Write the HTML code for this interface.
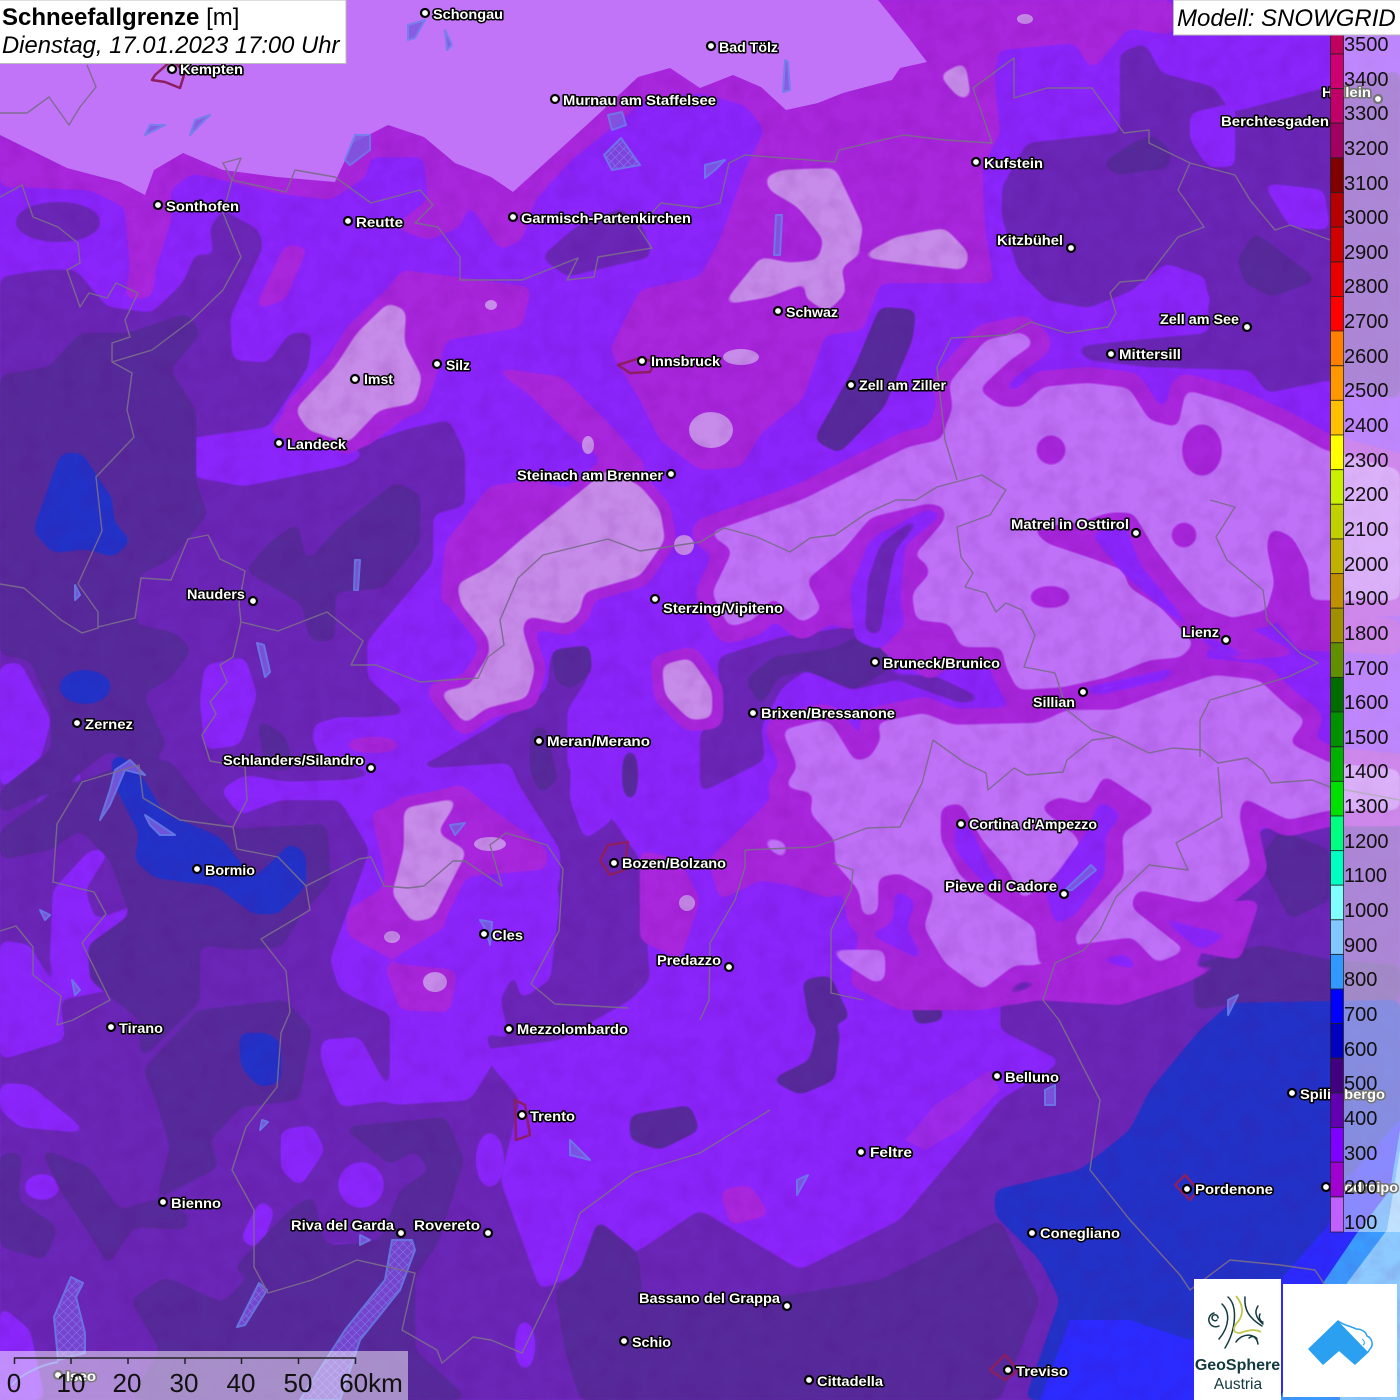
<!DOCTYPE html>
<html><head><meta charset="utf-8"><title>Schneefallgrenze</title>
<style>html,body{margin:0;padding:0;background:#8a25fb}svg{display:block}
.c text{font:bold 13.5px "Liberation Sans",sans-serif;fill:#fff;stroke:#000;stroke-width:3px;paint-order:stroke;stroke-linejoin:round}
.c circle{fill:#fff;stroke:#000;stroke-width:2.2px}
.l text{font:20px "Liberation Sans",sans-serif;fill:#111}
.s text{font:26px "Liberation Sans",sans-serif;fill:#111}
.b{fill:none;stroke:#7a6b8c;stroke-width:1.4;stroke-linejoin:round;opacity:.95}
.lk{fill:#7c5ae0;stroke:#6c80ea;stroke-width:2;stroke-linejoin:round;opacity:.85}
.ct{fill:none;stroke:#8c1f62;stroke-width:2.5;stroke-linejoin:round}
</style></head><body>
<svg width="1400" height="1400" viewBox="0 0 1400 1400" xmlns="http://www.w3.org/2000/svg">
<defs>
<filter id="g" x="0" y="0" width="1400" height="1400" filterUnits="userSpaceOnUse"><feGaussianBlur stdDeviation="5"/><feComponentTransfer><feFuncA type="linear" slope="6" intercept="-2.4"/></feComponentTransfer></filter>
<filter id="t" x="0" y="0" width="1400" height="1400" filterUnits="userSpaceOnUse"><feTurbulence type="fractalNoise" baseFrequency="0.05" numOctaves="3" seed="4"/><feColorMatrix values="0 0 0 0 0.1  0 0 0 0 0  0 0 0 0 0.2  1.6 0 0 0 -0.62"/></filter>
<pattern id="h" width="6" height="6" patternUnits="userSpaceOnUse" patternTransform="rotate(45)"><rect width="6" height="6" fill="#7a4ad8"/><path d="M0 0H6M0 0V6" stroke="#8f8cf0" stroke-width="1"/></pattern>
<path id="LE" d="M802 500L908 447 941 440 953 407 949 383 986 340 1022 332 1035 343 1010 360 978 390 1002 407 1022 407 1043 387 1088 383 1129 388 1149 420 1178 428 1186 390 1231 403 1284 427 1324 450 1400 470 1400 600 1310 600 1308 567 1292 537 1271 528 1267 547 1275 583 1267 610 1231 618 1202 607 1178 580 1153 547 1133 513 1108 513 1080 523 1031 528 1047 543 1092 558 1124 570 1129 587 1161 607 1194 643 1182 657 1149 660 1108 677 1063 687 1018 690 1006 667 1002 647 961 647 949 623 916 620 912 593 931 573 924 560 912 558 945 520 945 507 929 503 871 517 843 550 806 580 822 610 802 623 773 597 753 620 729 627 712 593 733 550 708 533ZM782 730L822 720 831 723 855 762 871 757 882 737 876 723 924 713 953 725 1039 723 1067 710 1116 710 1161 693 1214 675 1259 680 1288 707 1306 720 1288 743 1330 763 1400 770 1400 810 1330 810 1288 820 1243 797 1239 817 1251 867 1210 900 1198 903 1137 890 1131 907 1186 950 1157 963 1133 937 1088 943 1073 945 1039 965 1014 965 982 990 945 963 924 927 935 893 900 873 878 877 878 913 863 917 859 890 835 863 835 840 810 813 814 793 784 787 798 767Z"/>
<path id="LP" d="M457 584L461 604 488 637 490 653 469 686 439 692 465 724 486 708 527 698 535 669 522 629 527 616 567 624 580 612 584 592 640 576 665 540 660 510 640 486 608 469 563 506 522 539 490 567ZM406 310L388 303 357 333 335 367 295 410 308 430 348 443 379 410 415 403 422 377 404 343ZM765 177L782 170 835 168 863 227 857 257 841 267 846 293 827 312 804 297 808 282 769 297 722 305 761 257 790 263 818 260 824 240 798 207 769 190ZM859 257L896 237 945 228 969 253 965 270 904 263ZM939 75L965 62 971 98 959 98ZM404 808L459 798 437 833 467 851 433 918 412 922 392 894 404 849ZM662 665L690 658 712 690 712 718 690 720 665 695Z"/>
</defs>
<rect width="1400" height="1400" fill="#8a25fb"/>

<g fill="#6b27b6" filter="url(#g)">
<polygon points="0,277 45,270 76,270 107,307 152,313 183,283 196,253 214,257 210,227 223,210 259,230 263,247 230,317 232,360 268,363 290,333 312,333 308,367 268,427 174,440 196,478 245,486 327,457 408,429 449,420 465,453 465,506 433,514 433,563 367,641 367,678 408,714 351,718 310,731 318,755 380,767 428,763 490,727 547,690 551,653 588,649 588,678 567,710 567,767 616,824 640,860 650,980 630,1000 560,1040 478,1050 520,1100 500,1180 540,1290 640,1250 700,1210 800,1270 900,1220 960,1150 1000,1100 1050,1070 1100,1030 1182,940 1200,960 1259,830 1330,815 1400,810 1400,1400 0,1400"/>
<polygon points="1002,187 1027,143 1120,133 1120,53 1145,43 1161,73 1214,87 1231,113 1329,87 1400,70 1400,400 1329,380 1267,393 1251,370 1149,367 1088,360 1075,347 1108,343 1210,333 1206,277 1165,263 1133,290 1088,308 1047,300 1018,270 1002,217"/>
<polygon points="541,257 576,227 621,208 643,227 652,257 594,270 567,277"/>
<ellipse cx="58" cy="222" rx="43" ry="20"/>
<polygon points="880,307 916,310 912,340 884,407 839,453 814,440 855,367"/>
<polygon points="718,657 782,637 876,623 892,673 937,677 986,700 961,703 896,680 851,690 806,670 782,687 761,727 765,760 700,793 700,733 720,713"/>
<polygon points="1002,980 1040,972 1140,990 1180,1020 1060,1060 1000,1030"/>
</g>

<g fill="#8a25fb" filter="url(#g)">
<polygon points="216,449 278,424 367,453 347,465 245,486 220,482"/>
<polygon points="205,665 245,657 257,695 240,745 205,750 200,700"/>
<polygon points="0,665 20,662 51,720 40,760 0,790"/>
<polygon points="312,725 340,717 410,720 430,763 380,775 320,755"/>
<polygon points="220,790 245,775 286,782 347,780 408,770 510,763 518,784 560,850 560,880 500,1000 510,1040 480,1030 450,1020 380,1010 340,990 330,960 370,850 340,800 280,800 240,815"/>
<polygon points="572,720 600,700 620,770 612,820 585,840 570,800"/>
<polygon points="520,880 545,860 560,900 550,980 520,1000 510,930"/>
<polygon points="33,808 53,771 82,767 78,788 53,808"/>
<polygon points="53,890 90,850 110,850 85,890 95,920 150,900 175,920 175,950 135,950 110,990 60,1000 50,960"/>
<polygon points="0,940 30,945 60,1000 65,1040 0,1060"/>
<polygon points="0,1083 30,1085 85,1130 85,1133 20,1127 0,1110"/>
<polygon points="321,1040 360,1037 393,1100 340,1107 321,1060"/>
<polygon points="390,1000 470,1000 495,1060 470,1100 390,1105"/>
<polygon points="281,1130 312,1125 325,1150 300,1187 281,1170"/>
<ellipse cx="361" cy="1185" rx="23" ry="23"/><ellipse cx="490" cy="1160" rx="14" ry="28"/><ellipse cx="525" cy="1345" rx="10" ry="25"/>
<ellipse cx="210" cy="1067" rx="10" ry="30"/><ellipse cx="42" cy="1187" rx="18" ry="13"/><ellipse cx="606" cy="1313" rx="19" ry="14"/>
<polygon points="240,1240 260,1200 275,1210 260,1250"/>
<polygon points="0,1305 30,1330 45,1400 0,1400"/>
<polygon points="300,1290 332,1243 380,1245 375,1260 340,1265 320,1290"/>
<polygon points="1190,113 1235,103 1235,167 1208,167 1190,140"/>
<polygon points="1263,183 1324,190 1330,230 1290,227"/>
<ellipse cx="1170" cy="300" rx="40" ry="25"/>
</g>

<g fill="#57299a" filter="url(#g)">
<polygon points="0,375 49,367 80,333 129,333 187,313 201,333 170,370 196,410 196,482 208,514 171,559 139,575 135,624 175,633 192,649 171,678 143,694 167,747 140,770 110,750 70,780 0,815 0,790 51,750 51,710 30,660 0,655"/>
<polygon points="60,790 110,770 170,760 204,804 233,829 327,824 331,882 302,914 282,947 240,950 200,945 200,1000 140,1060 140,1020 90,980 88,945 130,915 110,860 80,830 50,850 0,860 0,830"/>
<polygon points="298,522 306,563 339,527 396,482 420,494 420,543 384,588 335,592 335,641 310,641 302,604 245,571 269,543"/>
<polygon points="257,718 285,735 295,770 265,770"/>
<polygon points="530,730 545,725 558,780 540,795 530,770"/><ellipse cx="630" cy="775" rx="8" ry="26"/>
<polygon points="551,650 590,645 592,672 570,690 555,680"/>
<polygon points="40,1148 89,1167 120,1210 152,1200 188,1213 188,1230 134,1227 107,1267 98,1247 60,1190"/>
<polygon points="0,1153 22,1153 18,1200 58,1227 45,1260 0,1247"/>
<polygon points="143,1070 200,1010 286,1000 312,1030 299,1100 241,1107 210,1140 219,1167 156,1200 170,1147 156,1100"/>
<polygon points="342,1127 446,1117 464,1160 438,1243 415,1277 415,1350 470,1400 130,1400 160,1350 130,1300 165,1277 223,1303 250,1275 232,1270 290,1210 313,1195 325,1245 365,1243 380,1240 400,1190 430,1170 415,1150 390,1165"/>
<polygon points="598,1220 638,1253 643,1300 760,1300 880,1280 1000,1220 1040,1300 1000,1400 580,1400 565,1350 555,1290 580,1270"/>
<polygon points="745,680 773,657 835,648 876,627 892,667 855,690 806,670 778,677 761,707"/>
<polygon points="880,307 916,310 912,340 884,407 839,453 814,440 855,367"/>
<polygon points="1102,163 1133,143 1153,135 1171,150 1169,168 1116,175"/>
<polygon points="1255,232 1318,280 1271,297 1245,283 1237,260"/>
<polygon points="802,980 830,975 851,1020 810,1025"/><polygon points="906,973 930,980 945,1020 915,1025"/>
<polygon points="1194,1010 1194,965 1260,945 1330,960 1400,965 1400,1000 1240,1003"/>
<polygon points="630,1115 690,1105 700,1130 660,1150 630,1140"/>
<polygon points="770,1080 810,1060 820,1015 840,1030 835,1080 800,1095"/>
<polygon points="1259,860 1280,830 1330,850 1330,900 1290,920"/>
</g>

<g fill="#a825dc" filter="url(#g)">
<polygon points="0,100 760,50 878,0 1173,0 1173,35 1128,28 1092,70 1075,43 998,50 994,80 1000,133 982,167 985,230 994,283 945,283 880,283 863,330 825,335 802,400 761,433 741,467 700,470 660,440 640,400 610,350 640,290 700,277 720,240 745,170 765,130 745,105 700,93 643,100 625,117 571,160 535,200 522,240 500,250 469,203 460,227 428,240 393,227 428,200 424,157 370,157 366,177 330,200 277,193 223,180 192,173 170,190 172,217 156,267 152,297 125,300 130,267 125,207 90,190 22,187 0,187"/>
<polygon points="402,270 531,287 522,327 446,340 429,400 366,447 312,447 268,433 321,367 366,317"/>
<polygon points="254,310 285,245 308,247 285,300"/>
<polygon points="491,367 562,377 612,427 650,470 620,470 575,440 530,395"/>
<polygon points="445,543 490,486 535,480 570,490 500,550 460,585 440,610"/>
<polygon points="780,790 810,813 835,840 835,900 790,885 760,880 720,900 708,860 750,820"/>
<polygon points="860,930 940,970 980,1005 1040,985 1090,960 1160,975 1240,960 1260,950 1180,985 1120,1005 1040,1000 980,1010 900,1010 850,985"/>
<polygon points="806,580 843,550 880,560 931,573 912,620 949,640 960,660 930,680 880,650 875,620 850,630 822,620"/>
<polygon points="371,812 461,784 490,808 547,849 547,869 449,878 445,927 392,959 347,935 347,910 388,886"/>
<polygon points="384,963 457,970 450,1012 400,1010"/>
<polygon points="640,850 680,860 700,900 680,960 640,940"/>
<polygon points="720,1190 750,1185 770,1215 730,1225"/>
<ellipse cx="373" cy="745" rx="28" ry="8"/>
<use href="#LE" stroke="#a825dc" stroke-width="32" stroke-linejoin="round"/>
<use href="#LP" stroke="#a825dc" stroke-width="22" stroke-linejoin="round"/>
</g>
<polygon fill="#9c2ae8" points="905,1140 935,1105 990,1070 1000,1090 960,1130 925,1150"/>

<g fill="#8a25fb" filter="url(#g)">
<polygon points="1070,690 1120,680 1185,665 1165,680 1100,695"/>
<polygon points="1290,560 1300,550 1310,600 1300,610"/>
<polygon points="925,510 945,512 905,545 900,600 905,625 880,650 855,640 850,590 870,540"/>
</g>
<g fill="#6b27b6" filter="url(#g)"><polygon points="905,525 925,515 895,550 885,600 880,635 865,632 868,580 880,545"/></g>

<use href="#LE" fill="#bf72f7" filter="url(#g)"/>
<use href="#LP" fill="#c78ce9" filter="url(#g)"/>
<g fill="#bf72f7" filter="url(#g)"><polygon points="761,837 786,842 786,860 770,850"/><polygon points="820,940 835,950 885,950 885,980 875,983 840,960"/></g>
<g fill="#c78ce9"><ellipse cx="741" cy="357" rx="18" ry="8"/><ellipse cx="711" cy="430" rx="22" ry="18"/><ellipse cx="1025" cy="19" rx="8" ry="5"/><ellipse cx="491" cy="305" rx="6" ry="5"/><ellipse cx="588" cy="445" rx="6" ry="9"/><ellipse cx="490" cy="844" rx="16" ry="7"/><ellipse cx="435" cy="982" rx="12" ry="10"/><ellipse cx="392" cy="937" rx="8" ry="6"/><ellipse cx="687" cy="903" rx="8" ry="8"/><ellipse cx="684" cy="545" rx="10" ry="10"/></g>

<g fill="#a825dc" filter="url(#g)">
<ellipse cx="1050" cy="597" rx="21" ry="11"/><ellipse cx="1184" cy="535" rx="13" ry="13"/><ellipse cx="1051" cy="450" rx="15" ry="15"/><ellipse cx="1202" cy="450" rx="20" ry="26"/>
<polygon points="941,807 961,803 982,840 1008,870 1022,900 1047,883 1080,853 1078,837 1039,807 1059,797 1088,805 1104,775 1157,810 1122,833 1124,877 1080,927 1073,940 1084,950 1039,967 1035,927 994,900 961,877 941,840"/>
<polygon points="1198,903 1137,890 1131,907 1186,950 1240,960 1260,900"/>
<polygon points="1271,528 1292,537 1308,567 1310,600 1330,610 1400,620 1400,655 1300,650 1267,610 1275,583 1267,547"/>
<polygon points="1031,528 1080,523 1108,513 1133,513 1153,547 1178,580 1202,607 1231,618 1300,655 1240,660 1194,643 1161,607 1129,587 1124,570 1092,558 1047,543"/>
</g>
<g fill="#8a25fb" filter="url(#g)">
<polygon points="955,820 972,830 990,870 1005,885 985,885 955,850"/>
<polygon points="1045,890 1085,835 1100,800 1122,815 1105,835 1105,875 1075,915 1055,925"/>
<polygon points="1150,910 1185,925 1230,935 1200,950"/>
<polygon points="1090,533 1125,525 1140,565 1190,625 1215,640 1260,660 1220,655 1170,615 1125,575"/>
</g>

<g fill="#2232c8" filter="url(#g)">
<polygon points="33,531 49,486 61,453 82,453 98,478 112,498 114,522 131,541 114,557 86,549 53,553"/>
<ellipse cx="85" cy="687" rx="26" ry="17"/>
<polygon points="110,759 122,755 141,775 163,812 180,820 220,837 253,878 273,861 290,843 306,853 306,886 278,914 253,914 216,886 155,878 135,861 139,833 118,792"/>
<polygon points="239,1033 268,1033 281,1043 281,1083 259,1087 241,1067"/>
<polygon points="1231,1003 1400,1000 1400,1400 1025,1400 1060,1300 1040,1260 995,1215 995,1190 1080,1170 1130,1130 1150,1090 1200,1030"/>
</g>
<polygon fill="#2b2bff" points="1040,1400 1070,1320 1130,1320 1190,1340 1280,1280 1327,1227 1345,1180 1400,1120 1400,1400"/>
<polygon fill="#3b9bff" points="1280,1400 1323,1283 1357,1233 1390,1190 1400,1130 1400,1400"/>
<polygon fill="#8dcaff" points="1340,1400 1347,1283 1387,1230 1400,1150 1400,1400"/>

<rect width="1400" height="1400" filter="url(#t)" opacity=".15"/>
<polygon fill="#c274f8" points="0,0 878,0 908,37 927,62 900,68 892,80 843,93 818,103 786,110 761,87 733,75 700,88 670,68 638,77 603,110 567,143 513,192 491,177 455,163 424,137 388,125 353,143 335,182 277,177 223,170 183,153 154,170 145,195 120,182 67,168 0,135"/>

<g class="lk">
<polygon fill="url(#h)" points="392,1240 412,1240 415,1250 400,1290 360,1340 340,1400 300,1400 345,1330 385,1280"/>
<polygon fill="url(#h)" points="71,1277 83,1283 76,1297 85,1333 85,1353 58,1360 54,1317"/>
<path fill="none" d="M58 1362C40 1365 20 1375 12 1385"/>
<polygon fill="url(#h)" points="259,1283 267,1290 245,1325 237,1327"/>
<polygon fill="url(#h)" points="621,138 640,165 612,170 604,155"/>
<polygon points="608,115 622,112 626,125 612,130"/>
<polygon points="355,135 370,135 370,150 350,165 345,160"/>
<polygon points="115,770 130,760 145,775 125,770 110,805 100,820 110,790"/>
<polygon points="145,815 175,835 160,835 150,825"/>
<polygon points="776,215 782,215 780,255 774,255"/>
<polygon points="705,165 725,160 715,170 705,178"/>
<polygon points="355,560 360,560 358,590 354,590"/>
<polygon points="257,643 264,645 270,672 265,677"/>
<polygon points="1045,1090 1055,1085 1055,1105 1045,1105"/>
<polygon points="1091,865 1065,890 1072,890 1096,870"/>
<polygon points="480,920 492,922 490,945 486,930"/>
<polygon points="408,25 425,20 415,38 408,40"/>
<polygon points="785,60 788,62 790,90 783,92"/>
<polygon points="445,30 452,45 447,50"/><polygon points="195,120 210,115 190,135"/>
<polygon points="150,125 165,125 145,135"/><polygon points="75,585 80,595 75,600"/>
<polygon points="40,910 50,915 45,920"/><polygon points="72,980 80,990 75,995"/>
<polygon points="262,1120 268,1122 260,1130"/><polygon points="570,1140 580,1150 590,1160 570,1155"/>
<polygon points="450,825 465,823 455,835"/><polygon points="1228,1000 1238,995 1228,1015"/>
<polygon points="360,1235 370,1240 360,1245"/><polygon points="797,1180 808,1175 797,1195"/>
</g>

<g class="ct">
<polygon points="155,75 172,60 185,72 180,88 165,82 152,80"/>
<polygon points="618,365 640,358 655,362 650,372 630,373"/>
<polygon points="600,860 608,845 628,842 624,870 610,875"/>
<polygon points="515,1100 525,1105 530,1135 516,1140"/>
<polygon points="1175,1185 1185,1175 1198,1190 1190,1200"/>
<polygon points="990,1370 1005,1355 1018,1370 1005,1380"/>
</g>

<g>
<polyline class="b" points="0,197 22,185 33,217 58,227 78,243 80,263 67,270 80,307 89,293 107,298 116,283 138,293 125,320 130,337 112,343 112,362 132,373 127,410 134,437 96,477 102,531 78,584 98,612 98,628 82,633 61,620 24,588 0,584"/>
<polyline class="b" points="98,627 135,618 141,578 171,580 188,539 208,535 220,559 245,571 239,604 241,622 278,631 327,612 363,641 351,665 376,665 420,682 478,678 488,657 504,645 500,620 518,578 543,555 608,539 640,551 700,542 724,528 757,537 790,552 810,538 835,535 867,513 896,500 916,500 937,487 982,475 1006,490 990,515 957,527 961,557 973,573 965,587 986,593 996,612 1006,603 1022,610 1035,635 1024,667 1055,673 1067,710 1092,730 1116,737 1149,753 1173,748 1202,750 1218,763 1247,758 1263,770 1271,783 1312,780 1330,787 1400,800"/>
<polyline class="b" points="957,480 945,440 937,367 951,338 1006,335 1031,322 1067,333 1108,327 1116,313 1110,293 1120,282 1145,280 1178,237 1204,227 1178,190 1190,163 1149,143 1149,130 1124,133 1092,88 1047,88 1014,98 1014,58 973,88 992,143 945,140 904,135 839,150 835,162 745,155 729,163 720,203 700,208 661,203 638,227 652,248 598,257 594,277 567,280 578,258 522,280 460,280 460,257 438,227 415,223 433,205 420,190 371,203 335,177 295,170 286,192 232,180 223,163 241,158 232,180 223,213 241,257 223,290 192,320 152,350 112,362"/>
<polyline class="b" points="87,65 96,87 80,107 69,125 49,97 27,113 0,113"/>
<polyline class="b" points="1190,163 1235,175 1250,200 1275,230 1290,225 1330,240"/>
<polyline class="b" points="933,740 965,763 986,773 988,790 1014,768 1027,775 1063,772 1067,760 1092,740 1116,737"/>
<polyline class="b" points="933,740 922,783 900,827 867,828 835,840 814,847 745,850 745,867 735,900 710,943 709,1000 700,1020"/>
<polyline class="b" points="833,863 853,870 851,890 831,930 831,993 863,1000"/>
<polyline class="b" points="1200,757 1200,720 1210,700 1251,688 1288,677 1318,663 1300,653 1267,620 1263,590 1227,560 1216,537 1235,507 1210,500"/>
<polyline class="b" points="1218,767 1222,817 1176,843 1188,870 1149,865 1116,897 1100,930 1084,950 1055,963 1043,1000 1059,1020 1100,1100 1090,1170 1130,1220 1180,1275 1190,1290 1230,1260 1280,1265 1315,1270 1325,1285"/>
<polyline class="b" points="0,931 16,926 33,947 33,975 61,996 57,1025 73,1020 110,1000 82,943 106,914 94,892 53,882 57,824 82,782 139,765 143,798 180,820 233,827 237,849 278,857 306,886 310,910 261,939 286,971 290,1012 281,1033 277,1087 246,1127 232,1170 254,1210 254,1267 268,1293 312,1280 357,1260 415,1273 402,1330 437,1350 442,1363 473,1337 491,1340 522,1353 554,1287 580,1213 634,1173 700,1153 770,1110"/>
<polyline class="b" points="306,886 359,859 371,857 384,886 408,888 424,886 453,861 465,861 502,886 490,845 506,833 547,845 563,869 559,931 531,984 555,1004 628,1008"/>
<polyline class="b" points="241,622 233,657 220,665 227,682 210,702 216,714 202,735 210,761 245,767 247,800 233,827"/>
</g>

<g class="c">
<circle cx="425" cy="13" r="4"/><text x="433" y="19" textLength="70" lengthAdjust="spacingAndGlyphs">Schongau</text>
<circle cx="711" cy="46" r="4"/><text x="719" y="52" textLength="59" lengthAdjust="spacingAndGlyphs">Bad Tölz</text>
<circle cx="172" cy="69" r="4"/><text x="180" y="74" textLength="63" lengthAdjust="spacingAndGlyphs">Kempten</text>
<circle cx="555" cy="99" r="4"/><text x="563" y="105" textLength="153" lengthAdjust="spacingAndGlyphs">Murnau am Staffelsee</text>
<circle cx="976" cy="162" r="4"/><text x="984" y="168" textLength="59" lengthAdjust="spacingAndGlyphs">Kufstein</text>
<circle cx="158" cy="205" r="4"/><text x="166" y="211" textLength="73" lengthAdjust="spacingAndGlyphs">Sonthofen</text>
<circle cx="348" cy="221" r="4"/><text x="356" y="227" textLength="47" lengthAdjust="spacingAndGlyphs">Reutte</text>
<circle cx="513" cy="217" r="4"/><text x="521" y="223" textLength="170" lengthAdjust="spacingAndGlyphs">Garmisch-Partenkirchen</text>
<circle cx="1071" cy="248" r="4"/><text x="997" y="245" textLength="66" lengthAdjust="spacingAndGlyphs">Kitzbühel</text>
<circle cx="778" cy="311" r="4"/><text x="786" y="317" textLength="52" lengthAdjust="spacingAndGlyphs">Schwaz</text>
<circle cx="1247" cy="327" r="4"/><text x="1160" y="324" textLength="79" lengthAdjust="spacingAndGlyphs">Zell am See</text>
<circle cx="1111" cy="354" r="4"/><text x="1119" y="359" textLength="62" lengthAdjust="spacingAndGlyphs">Mittersill</text>
<circle cx="642" cy="361" r="4"/><text x="651" y="366" textLength="69" lengthAdjust="spacingAndGlyphs">Innsbruck</text>
<circle cx="437" cy="364" r="4"/><text x="446" y="370" textLength="24" lengthAdjust="spacingAndGlyphs">Silz</text>
<circle cx="355" cy="379" r="4"/><text x="364" y="384" textLength="29" lengthAdjust="spacingAndGlyphs">Imst</text>
<circle cx="851" cy="385" r="4"/><text x="859" y="390" textLength="87" lengthAdjust="spacingAndGlyphs">Zell am Ziller</text>
<circle cx="279" cy="443" r="4"/><text x="287" y="449" textLength="59" lengthAdjust="spacingAndGlyphs">Landeck</text>
<circle cx="671" cy="474" r="4"/><text x="517" y="480" textLength="146" lengthAdjust="spacingAndGlyphs">Steinach am Brenner</text>
<circle cx="1136" cy="533" r="4"/><text x="1011" y="529" textLength="118" lengthAdjust="spacingAndGlyphs">Matrei in Osttirol</text>
<circle cx="253" cy="601" r="4"/><text x="187" y="599" textLength="58" lengthAdjust="spacingAndGlyphs">Nauders</text>
<circle cx="655" cy="599" r="4"/><text x="663" y="613" textLength="120" lengthAdjust="spacingAndGlyphs">Sterzing/Vipiteno</text>
<circle cx="1226" cy="640" r="4"/><text x="1182" y="637" textLength="37" lengthAdjust="spacingAndGlyphs">Lienz</text>
<circle cx="875" cy="662" r="4"/><text x="883" y="668" textLength="117" lengthAdjust="spacingAndGlyphs">Bruneck/Brunico</text>
<circle cx="1083" cy="692" r="4"/><text x="1033" y="707" textLength="42" lengthAdjust="spacingAndGlyphs">Sillian</text>
<circle cx="77" cy="723" r="4"/><text x="85" y="729" textLength="48" lengthAdjust="spacingAndGlyphs">Zernez</text>
<circle cx="753" cy="713" r="4"/><text x="761" y="718" textLength="134" lengthAdjust="spacingAndGlyphs">Brixen/Bressanone</text>
<circle cx="539" cy="741" r="4"/><text x="547" y="746" textLength="103" lengthAdjust="spacingAndGlyphs">Meran/Merano</text>
<circle cx="371" cy="768" r="4"/><text x="223" y="765" textLength="141" lengthAdjust="spacingAndGlyphs">Schlanders/Silandro</text>
<circle cx="961" cy="824" r="4"/><text x="969" y="829" textLength="128" lengthAdjust="spacingAndGlyphs">Cortina d'Ampezzo</text>
<circle cx="614" cy="863" r="4"/><text x="622" y="868" textLength="104" lengthAdjust="spacingAndGlyphs">Bozen/Bolzano</text>
<circle cx="197" cy="869" r="4"/><text x="205" y="875" textLength="50" lengthAdjust="spacingAndGlyphs">Bormio</text>
<circle cx="1064" cy="894" r="4"/><text x="945" y="891" textLength="112" lengthAdjust="spacingAndGlyphs">Pieve di Cadore</text>
<circle cx="484" cy="934" r="4"/><text x="492" y="940" textLength="31" lengthAdjust="spacingAndGlyphs">Cles</text>
<circle cx="729" cy="967" r="4"/><text x="657" y="965" textLength="64" lengthAdjust="spacingAndGlyphs">Predazzo</text>
<circle cx="111" cy="1027" r="4"/><text x="119" y="1033" textLength="44" lengthAdjust="spacingAndGlyphs">Tirano</text>
<circle cx="509" cy="1029" r="4"/><text x="517" y="1034" textLength="111" lengthAdjust="spacingAndGlyphs">Mezzolombardo</text>
<circle cx="997" cy="1076" r="4"/><text x="1005" y="1082" textLength="54" lengthAdjust="spacingAndGlyphs">Belluno</text>
<circle cx="1292" cy="1093" r="4"/><text x="1300" y="1099" textLength="85" lengthAdjust="spacingAndGlyphs">Spilimbergo</text>
<circle cx="522" cy="1115" r="4"/><text x="530" y="1121" textLength="45" lengthAdjust="spacingAndGlyphs">Trento</text>
<circle cx="861" cy="1152" r="4"/><text x="870" y="1157" textLength="42" lengthAdjust="spacingAndGlyphs">Feltre</text>
<circle cx="1187" cy="1189" r="4"/><text x="1195" y="1194" textLength="78" lengthAdjust="spacingAndGlyphs">Pordenone</text>
<circle cx="1326" cy="1187" r="4"/><text x="1334" y="1192" textLength="64" lengthAdjust="spacingAndGlyphs">Codroipo</text>
<circle cx="163" cy="1202" r="4"/><text x="171" y="1208" textLength="50" lengthAdjust="spacingAndGlyphs">Bienno</text>
<circle cx="401" cy="1233" r="4"/><text x="291" y="1230" textLength="103" lengthAdjust="spacingAndGlyphs">Riva del Garda</text>
<circle cx="488" cy="1233" r="4"/><text x="414" y="1230" textLength="66" lengthAdjust="spacingAndGlyphs">Rovereto</text>
<circle cx="1032" cy="1233" r="4"/><text x="1040" y="1238" textLength="80" lengthAdjust="spacingAndGlyphs">Conegliano</text>
<circle cx="787" cy="1306" r="4"/><text x="639" y="1303" textLength="141" lengthAdjust="spacingAndGlyphs">Bassano del Grappa</text>
<circle cx="624" cy="1341" r="4"/><text x="632" y="1347" textLength="39" lengthAdjust="spacingAndGlyphs">Schio</text>
<circle cx="58" cy="1375" r="4"/><text x="66" y="1381" textLength="30" lengthAdjust="spacingAndGlyphs">Iseo</text>
<circle cx="809" cy="1380" r="4"/><text x="817" y="1386" textLength="66" lengthAdjust="spacingAndGlyphs">Cittadella</text>
<circle cx="1008" cy="1370" r="4"/><text x="1016" y="1376" textLength="52" lengthAdjust="spacingAndGlyphs">Treviso</text>
<circle cx="1378" cy="99" r="4"/><text x="1322" y="97" textLength="49" lengthAdjust="spacingAndGlyphs">Hallein</text>
<text x="1221" y="126" textLength="108" lengthAdjust="spacingAndGlyphs">Berchtesgaden</text>
</g>

<!-- legend -->
<rect x="1343" y="35" width="57" height="1197" fill="#fff" fill-opacity=".45"/>
<g stroke="#222" stroke-width="1" stroke-opacity=".75">
<rect x="1330.500" y="19" width="13" height="35" fill="#c0005c"/>
<rect x="1330.500" y="54" width="13" height="34.600" fill="#cc0070"/>
<rect x="1330.500" y="88.600" width="13" height="34.600" fill="#c00068"/>
<rect x="1330.500" y="123.200" width="13" height="34.600" fill="#a00060"/>
<rect x="1330.500" y="158" width="13" height="34.600" fill="#800000"/>
<rect x="1330.500" y="192.600" width="13" height="34.600" fill="#b40000"/>
<rect x="1330.500" y="227.200" width="13" height="34.600" fill="#d00000"/>
<rect x="1330.500" y="262" width="13" height="34.600" fill="#e80000"/>
<rect x="1330.500" y="296.500" width="13" height="34.600" fill="#ff0000"/>
<rect x="1330.500" y="331" width="13" height="34.600" fill="#ff8000"/>
<rect x="1330.500" y="365.800" width="13" height="34.600" fill="#ff9800"/>
<rect x="1330.500" y="400.400" width="13" height="34.600" fill="#ffc000"/>
<rect x="1330.500" y="435" width="13" height="34.600" fill="#ffff00"/>
<rect x="1330.500" y="469.700" width="13" height="34.600" fill="#c8f000"/>
<rect x="1330.500" y="504.300" width="13" height="34.600" fill="#c0d000"/>
<rect x="1330.500" y="539" width="13" height="34.600" fill="#c0b000"/>
<rect x="1330.500" y="573.600" width="13" height="34.600" fill="#c09000"/>
<rect x="1330.500" y="608.200" width="13" height="34.600" fill="#a09000"/>
<rect x="1330.500" y="642.800" width="13" height="34.600" fill="#609000"/>
<rect x="1330.500" y="677.500" width="13" height="34.600" fill="#006c00"/>
<rect x="1330.500" y="712" width="13" height="34.600" fill="#009000"/>
<rect x="1330.500" y="746.800" width="13" height="34.600" fill="#00b000"/>
<rect x="1330.500" y="781.400" width="13" height="34.600" fill="#00e000"/>
<rect x="1330.500" y="816" width="13" height="34.600" fill="#00ff80"/>
<rect x="1330.500" y="850.600" width="13" height="34.600" fill="#00ffc0"/>
<rect x="1330.500" y="885.200" width="13" height="34.600" fill="#80ffff"/>
<rect x="1330.500" y="919.800" width="13" height="34.600" fill="#80c8ff"/>
<rect x="1330.500" y="954.500" width="13" height="34.600" fill="#3098ff"/>
<rect x="1330.500" y="989" width="13" height="34.600" fill="#0000ff"/>
<rect x="1330.500" y="1023.600" width="13" height="34.600" fill="#0000c0"/>
<rect x="1330.500" y="1058.200" width="13" height="34.600" fill="#400080"/>
<rect x="1330.500" y="1093" width="13" height="34.600" fill="#6000b0"/>
<rect x="1330.500" y="1127.600" width="13" height="34.600" fill="#8000ff"/>
<rect x="1330.500" y="1162.200" width="13" height="34.600" fill="#a000d0"/>
<rect x="1330.500" y="1197" width="13" height="35" fill="#c060ff"/>
</g>
<g class="l">
<text x="1344" y="51">3500</text><text x="1344" y="86">3400</text><text x="1344" y="120">3300</text><text x="1344" y="155">3200</text><text x="1344" y="190">3100</text><text x="1344" y="224">3000</text><text x="1344" y="259">2900</text><text x="1344" y="293">2800</text><text x="1344" y="328">2700</text><text x="1344" y="363">2600</text><text x="1344" y="397">2500</text><text x="1344" y="432">2400</text><text x="1344" y="467">2300</text><text x="1344" y="501">2200</text><text x="1344" y="536">2100</text><text x="1344" y="571">2000</text><text x="1344" y="605">1900</text><text x="1344" y="640">1800</text><text x="1344" y="675">1700</text><text x="1344" y="709">1600</text><text x="1344" y="744">1500</text><text x="1344" y="778">1400</text><text x="1344" y="813">1300</text><text x="1344" y="848">1200</text><text x="1344" y="882">1100</text><text x="1344" y="917">1000</text><text x="1344" y="952">900</text><text x="1344" y="986">800</text><text x="1344" y="1021">700</text><text x="1344" y="1056">600</text><text x="1344" y="1090">500</text><text x="1344" y="1125">400</text><text x="1344" y="1160">300</text><text x="1344" y="1194">200</text><text x="1344" y="1229">100</text>
</g>

<!-- title boxes -->
<rect x="-1" y="0" width="347" height="63.500" fill="#fff" stroke="#bbb"/>
<text x="2" y="25" font-family="Liberation Sans" font-size="24" fill="#000"><tspan font-weight="bold">Schneefallgrenze</tspan> [m]</text>
<text x="2" y="53" font-family="Liberation Sans" font-size="23.800" font-style="italic" fill="#000">Dienstag, 17.01.2023 17:00 Uhr</text>
<rect x="1173.500" y="0" width="227" height="35" fill="#fff" stroke="#bbb"/>
<text x="1177" y="26" font-family="Liberation Sans" font-size="24" font-style="italic" fill="#000">Modell: SNOWGRID</text>

<!-- scale -->
<rect x="0" y="1351" width="408" height="49" fill="#fff" fill-opacity=".48"/>
<path d="M14.500 1364V1358H355.500V1364M71 1358V1364M128 1358V1364M185 1358V1364M241.500 1358V1364M298.500 1358V1364" fill="none" stroke="#222" stroke-width="1.500"/>
<g class="s" text-anchor="middle">
<text x="14" y="1392">0</text><text x="71" y="1392">10</text><text x="127" y="1392">20</text><text x="184" y="1392">30</text><text x="241" y="1392">40</text><text x="298" y="1392">50</text><text x="371" y="1392">60km</text>
</g>

<!-- logos -->
<rect x="1194" y="1279" width="87" height="121" fill="#fff"/>
<rect x="1283" y="1284" width="114" height="113" fill="#fff"/>
<path d="M1338 1321L1309 1349 1323 1364 1339 1350 1355 1364 1368 1352Z" fill="#2b9ff0" stroke="#2b9ff0" stroke-width="1.500" stroke-linejoin="round"/>
<path d="M1338 1321C1345 1326 1351 1326 1356 1329 1362 1329 1366 1332 1367 1336 1372 1338 1374 1345 1370 1349L1368 1352" fill="#fff" stroke="#2b9ff0" stroke-width="1.500"/>
<path d="M1362 1339C1365 1341 1365 1344 1363 1345" fill="none" stroke="#2b9ff0" stroke-width="1"/>
<g fill="none" stroke="#12393f" stroke-width="1.500" stroke-linecap="round">
<path d="M1214 1313A7 7 0 1 0 1219 1326"/><path d="M1218 1318A3 3 0 1 0 1217 1320"/>
<path d="M1222 1304C1230 1312 1230 1326 1219 1339"/><path d="M1228 1297C1238 1306 1236 1330 1225 1348"/><path d="M1236 1342C1242 1333 1256 1332 1258 1344"/><path d="M1249 1338C1252 1335 1256 1337 1257 1339"/>
<path d="M1245 1297C1244 1310 1249 1318 1262 1326"/><path d="M1258 1306C1253 1313 1258 1320 1263 1324"/><path d="M1260 1314C1258 1318 1261 1322 1263 1322"/>
</g>
<path d="M1236 1296C1246 1308 1242 1318 1236 1324 1232 1330 1234 1333 1240 1333 1248 1330 1256 1329 1261 1332" fill="none" stroke="#c1c750" stroke-width="1.800"/>
<text x="1237.500" y="1370" text-anchor="middle" font-family="Liberation Sans" font-weight="bold" font-size="16" fill="#12393f">GeoSphere</text>
<text x="1238" y="1389" text-anchor="middle" font-family="Liberation Sans" font-size="15.500" fill="#12393f">Austria</text>
</svg>
</body></html>
